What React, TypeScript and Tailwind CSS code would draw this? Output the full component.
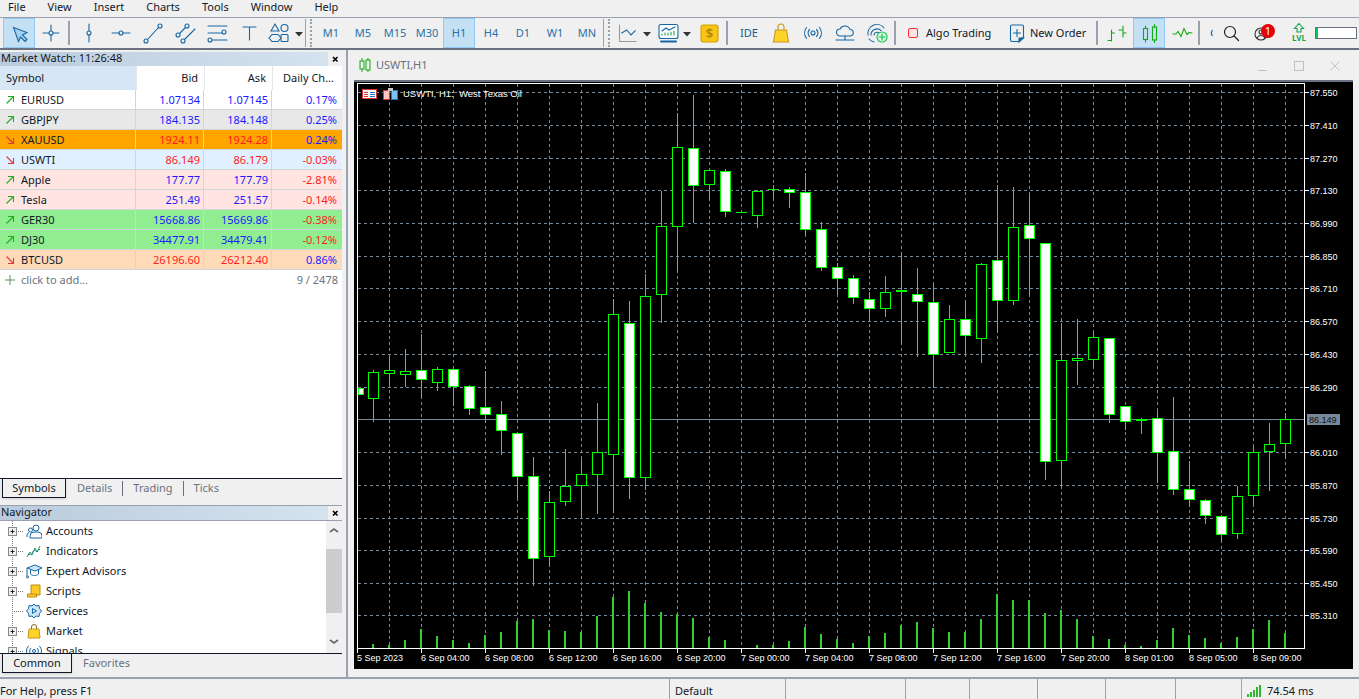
import type { ReactNode } from "react";

const blue = "#1667a5";

const menus = ["File", "View", "Insert", "Charts", "Tools", "Window", "Help"];
const periods = ["M1", "M5", "M15", "M30", "H1", "H4", "D1", "W1", "MN"];

const symbols = [
  { name: "EURUSD", bid: "1.07134", ask: "1.07145", change: "0.17%", up: true, neg: false, row: "bg-white" },
  { name: "GBPJPY", bid: "184.135", ask: "184.148", change: "0.25%", up: true, neg: false, row: "bg-[#e8e8e8]" },
  { name: "XAUUSD", bid: "1924.11", ask: "1924.28", change: "0.24%", up: false, neg: false, row: "bg-[#ffa500]" },
  { name: "USWTI", bid: "86.149", ask: "86.179", change: "-0.03%", up: false, neg: true, row: "bg-[#e0f0ff]" },
  { name: "Apple", bid: "177.77", ask: "177.79", change: "-2.81%", up: true, neg: true, row: "bg-[#ffe4e1]" },
  { name: "Tesla", bid: "251.49", ask: "251.57", change: "-0.14%", up: true, neg: true, row: "bg-[#ffe4e1]" },
  { name: "GER30", bid: "15668.86", ask: "15669.86", change: "-0.38%", up: true, neg: true, row: "bg-[#90ee90]" },
  { name: "DJ30", bid: "34477.91", ask: "34479.41", change: "-0.12%", up: true, neg: true, row: "bg-[#90ee90]" },
  { name: "BTCUSD", bid: "26196.60", ask: "26212.40", change: "0.86%", up: false, neg: false, row: "bg-[#ffdab9]" },
];

// top, bottom, wick top, wick bottom, white body, volume top
const candles: [number, number, number, number, boolean, number][] = [
  [388, 394, 388, 394, true, 648],
  [372, 398, 370, 422, false, 644],
  [370, 373, 357, 385, false, 645],
  [371, 374, 349, 387, false, 640],
  [370, 379, 334, 397, true, 629],
  [369, 382, 367, 391, false, 636],
  [369, 386, 369, 406, true, 640],
  [386, 408, 385, 415, true, 643],
  [407, 414, 371, 422, true, 635],
  [414, 430, 401, 455, true, 632],
  [433, 476, 432, 498, true, 621],
  [476, 558, 457, 586, true, 619],
  [502, 556, 491, 565, false, 630],
  [486, 501, 449, 506, false, 631],
  [474, 485, 459, 517, false, 632],
  [452, 474, 403, 514, false, 616],
  [314, 454, 299, 513, false, 597],
  [323, 477, 301, 499, true, 591],
  [296, 477, 274, 490, false, 603],
  [226, 294, 191, 323, false, 612],
  [147, 226, 113, 272, false, 614],
  [148, 185, 95, 223, true, 618],
  [170, 184, 170, 199, false, 637],
  [171, 211, 169, 217, true, 640],
  [212, 212, 212, 212, false, 648],
  [191, 215, 190, 228, false, 645],
  [189, 189, 185, 198, false, 645],
  [189, 192, 187, 208, true, 641],
  [192, 229, 173, 235, true, 627],
  [229, 267, 222, 271, true, 634],
  [267, 278, 263, 294, true, 639],
  [278, 297, 275, 304, true, 643],
  [299, 308, 292, 321, true, 636],
  [292, 308, 276, 317, false, 633],
  [290, 291, 252, 343, false, 625],
  [294, 301, 268, 357, true, 622],
  [302, 354, 285, 388, true, 628],
  [319, 352, 305, 352, false, 632],
  [319, 335, 300, 355, true, 632],
  [264, 338, 263, 363, false, 619],
  [260, 300, 185, 332, true, 594],
  [227, 300, 187, 305, false, 600],
  [225, 238, 195, 296, true, 600],
  [243, 461, 243, 480, true, 613],
  [360, 460, 323, 487, false, 610],
  [358, 360, 319, 385, false, 619],
  [337, 359, 333, 367, false, 636],
  [338, 414, 338, 423, true, 639],
  [406, 421, 406, 430, true, 645],
  [419, 420, 418, 434, false, 646],
  [418, 452, 411, 482, true, 640],
  [451, 489, 397, 495, true, 628],
  [489, 499, 461, 506, true, 635],
  [500, 515, 499, 524, true, 638],
  [516, 534, 515, 541, true, 643],
  [496, 533, 486, 539, false, 637],
  [452, 495, 447, 505, false, 629],
  [444, 451, 423, 491, false, 620],
  [419, 443, 413, 459, false, 633],
];

const prices = [
  ["87.550", 92], ["87.410", 125], ["87.270", 158], ["87.130", 190], ["86.990", 223],
  ["86.850", 256], ["86.710", 288], ["86.570", 321], ["86.430", 354], ["86.290", 387],
  ["86.010", 452], ["85.870", 485], ["85.730", 518], ["85.590", 550], ["85.450", 583], ["85.310", 615],
] as const;

const dates = [
  ["5 Sep 2023", 357], ["6 Sep 04:00", 421], ["6 Sep 08:00", 485], ["6 Sep 12:00", 549], ["6 Sep 16:00", 613],
  ["6 Sep 20:00", 677], ["7 Sep 00:00", 741], ["7 Sep 04:00", 805], ["7 Sep 08:00", 869], ["7 Sep 12:00", 933],
  ["7 Sep 16:00", 997], ["7 Sep 20:00", 1061], ["8 Sep 01:00", 1125], ["8 Sep 05:00", 1189], ["8 Sep 09:00", 1253],
] as const;

function Ico({ children, w = 24, color = blue }: { children: ReactNode; w?: number; color?: string }) {
  return (
    <svg width={w} height="24" viewBox={`0 0 ${w} 24`} fill="none" stroke={color} strokeWidth="1.1" strokeLinecap="round">
      {children}
    </svg>
  );
}

function Btn({ children, active, wide }: { children: ReactNode; active?: boolean; wide?: boolean }) {
  return (
    <div
      className={`flex h-7.5 shrink-0 items-center justify-center ${wide ? "w-10" : "w-8"} ${
        active ? "border border-[#90c8f6] bg-[#c4e0f5]" : ""
      }`}
    >
      {children}
    </div>
  );
}

function Sep() {
  return (
    <div className="flex h-7.5 w-1 shrink-0 items-center justify-center">
      <div className="h-6 w-0.5 bg-gray-400" />
    </div>
  );
}

function Grip() {
  return (
    <div className="flex h-7.5 w-2.5 shrink-0 items-center justify-start gap-0.5">
      <div className="h-7 w-px bg-gray-400" />
      <div className="ml-0.5 h-7 w-0.5 border-l-2 border-dotted border-gray-400" />
    </div>
  );
}

function Arrow({ x }: { x: number }) {
  return <path d={`M${x} 11h8l-4 4.5z`} fill="#333" stroke="none" />;
}

function Toolbar() {
  return (
    <div className="flex h-8 shrink-0 items-center border-b-2 border-gray-500 pl-0.75">
      <Btn active>
        <Ico>
          <path d="M6.5 6.5 20 11.5 15.5 14 20 18.5 18 20.500 13.5 16 11.5 20.5Z" fill="#a8d0ee" />
        </Ico>
      </Btn>
      <Btn>
        <Ico>
          <path d="M12 4v16M4 12h16" />
          <circle cx="12" cy="12" r="2" fill="#f0f0f0" />
        </Ico>
      </Btn>
      <div className="mr-0.5">
        <Sep />
      </div>
      <Btn>
        <Ico>
          <path d="M12 3v7M12 14v7" />
          <circle cx="12" cy="12" r="2" />
        </Ico>
      </Btn>
      <Btn>
        <Ico>
          <path d="M3 12h7M14 12h7" />
          <circle cx="12" cy="12" r="2" />
        </Ico>
      </Btn>
      <Btn>
        <Ico>
          <path d="M6.5 18.5 17.5 6.5" />
          <circle cx="5" cy="20" r="2" />
          <circle cx="19" cy="5" r="2" />
        </Ico>
      </Btn>
      <Btn>
        <Ico>
          <path d="M6.5 12.5 12.5 6.5M11.5 18.5 22 8" />
          <circle cx="5" cy="14" r="2" />
          <circle cx="14" cy="5" r="2" />
          <circle cx="10" cy="20" r="2" />
        </Ico>
      </Btn>
      <Btn>
        <Ico>
          <path d="M3 5h19M3 12h14M7 19h15" />
          <circle cx="19" cy="11" r="2" />
          <circle cx="5" cy="19" r="2" />
        </Ico>
      </Btn>
      <Btn>
        <Ico>
          <path d="M6 6h13M12.5 6v13" />
        </Ico>
      </Btn>
      <Btn wide>
        <Ico w={40}>
          <path d="M10 3 14 10H6Z" />
          <circle cx="19.5" cy="7" r="3.5" />
          <path d="M7 13.5h6l3 3.5-3 3.5H7L4 17z" />
          <rect x="16" y="13.5" width="7" height="7" rx="1" />
          <Arrow x={30} />
        </Ico>
      </Btn>
      <Grip />
      {periods.map((p) => (
        <Btn key={p} active={p === "H1"}>
          <span className="text-[#2b70a8]">{p}</span>
        </Btn>
      ))}
      <Grip />
      <Btn wide>
        <Ico w={40}>
          <path d="M6.5 4v16.5H23" stroke="#999" />
          <path d="M8.7 12l5-3 4.3 5 4.3-4.3" />
          <Arrow x={30} />
        </Ico>
      </Btn>
      <Btn wide>
        <Ico w={40}>
          <rect x="6" y="3.5" width="19" height="14" rx="2" fill="#fff" />
          <path d="M9 14v-1M12 14v-2M15 14v-2M18 14v-3M21 14v-4" stroke="#1aa34a" />
          <path d="M9 10l4-3 3 2 6-3" />
          <path d="M8 20.5h15" strokeWidth="2" />
          <Arrow x={30} />
        </Ico>
      </Btn>
      <Btn>
        <Ico color="#d49f00">
          <rect x="4" y="4" width="17" height="17" rx="2.5" fill="#f9c515" />
          <text x="12.5" y="17" textAnchor="middle" fontSize="13" fontWeight="700" fill="#b5860b" stroke="none">
            $
          </text>
        </Ico>
      </Btn>
      <Sep />
      <div className="w-1" />
      <Btn>
        <span className="text-[#0f5c99]">IDE</span>
      </Btn>
      <Btn>
        <Ico color="#c9971c">
          <path d="M6.5 9h11l2 12h-15z" fill="#ffd42a" />
          <path d="M9 9V6a3 3 0 0 1 6 0v3" />
        </Ico>
      </Btn>
      <Btn>
        <Ico>
          <circle cx="12" cy="12" r="2" />
          <path d="M8.5 8.5a5 5 0 0 0 0 7M15.5 8.5a5 5 0 0 1 0 7M5.5 6.5a9 9 0 0 0 0 11M18.5 6.5a9 9 0 0 1 0 11" />
        </Ico>
      </Btn>
      <Btn>
        <Ico>
          <path d="M7 15a3.5 3.5 0 0 1 0-7 5.5 5.5 0 0 1 10 .5 3.2 3.2 0 0 1 0 6.5z" />
          <path d="M12 15v4M3 19h18" />
        </Ico>
      </Btn>
      <Btn>
        <Ico>
          <path d="M3 14a9 9 0 0 1 16-7M6 14a6 6 0 0 1 10-4.5M9 14a3 3 0 0 1 5-2M4 18a9 9 0 0 0 5 3" />
          <circle cx="17" cy="16" r="5" stroke="#12c24a" fill="#d9ffe0" />
          <path d="M17 13v6M14 16h6" stroke="#12c24a" />
        </Ico>
      </Btn>
      <Sep />
      <div className="flex w-27 shrink-0 items-center gap-2 pl-2.75">
        <span className="h-2.5 w-2.5 rounded-xs border border-red-500 bg-red-100" />
        <span>Algo Trading</span>
      </div>
      <div className="flex w-22.5 shrink-0 items-center">
        <Ico>
          <path d="M7 4h10a1.5 1.5 0 0 1 1.5 1.5V16L14 20.5H7A1.5 1.5 0 0 1 5.5 19V5.5A1.5 1.5 0 0 1 7 4z" />
          <path d="M12 8.5v7M8.5 12h7" />
          <path d="M14 21v-4h4.5z" fill={blue} />
        </Ico>
        <span className="ml-px">New Order</span>
      </div>
      <Sep />
      <div className="w-0.5" />
      <Btn>
        <Ico color="#12a812">
          <path d="M6.5 9v11M3 19.5h3.5M6.5 12h3M18 5v11M14 9h4M18 12h3" />
        </Ico>
      </Btn>
      <Btn active>
        <Ico color="#12a812">
          <rect x="6.5" y="7.5" width="4" height="11" />
          <rect x="15.5" y="6" width="4" height="13" />
          <path d="M8.5 5v2.5M8.5 18.5V21M17.5 3.5V6M17.5 19v2.500" />
        </Ico>
      </Btn>
      <Btn>
        <Ico color="#12a812">
          <path d="M4 13h3l2-2.500 3 5 3-8 3 6 2-2 3 .5" />
        </Ico>
      </Btn>
      <Sep />
      <div className="w-3.5 shrink-0">
        <svg width="14" height="24" viewBox="0 0 14 24" fill="none" stroke={blue} strokeWidth="1.2">
          <path d="M11.5 9a5 5 0 0 0 0 6" />
        </svg>
      </div>
      <Btn>
        <Ico color="#222">
          <circle cx="11" cy="11" r="5.5" strokeWidth="1.2" />
          <path d="M15 15l4.5 4.5" strokeWidth="1.3" />
        </Ico>
      </Btn>
      <div className="relative flex h-7.5 w-8 shrink-0 items-center justify-center">
        <Ico color="#333">
          <circle cx="10" cy="13" r="6" />
          <circle cx="10" cy="11" r="2" />
          <path d="M6 17a4.5 4.5 0 0 1 8 0" />
        </Ico>
        <span className="absolute right-1 top-1.5 flex h-3.5 w-3.5 items-center justify-center rounded-full bg-red-600 text-white">
          1
        </span>
      </div>
      <div className="w-1" />
      <Btn>
        <Ico color="#19a34a">
          <path d="M12 2.5 16.5 7.5H14V11H10V7.5H7.5z" />
          <text x="12" y="20" textAnchor="middle" fontSize="8" fontWeight="700" fill="#19a34a" stroke="none">
            LVL
          </text>
        </Ico>
      </Btn>
      <div className="flex h-3 w-10.5 shrink-0 border border-gray-500 bg-white">
        <div className="w-0.5 bg-green-500" />
      </div>
    </div>
  );
}

function PanelHeader({ title }: { title: string }) {
  return (
    <div className="flex h-3.5 shrink-0 items-center">
      <div className="flex h-full w-82 items-center bg-linear-to-r from-[#b9cbdc] to-[#d5e3ef] pb-0.5 pl-px">{title}</div>
      <svg width="14" height="14" viewBox="0 0 14 14" stroke="#000" strokeWidth="1.6">
        <path d="M5 5l4.5 4.5M9.5 5 5 9.5" />
      </svg>
    </div>
  );
}

function Tabs({ active, others, width }: { active: string; others: string[]; width: string }) {
  return (
    <div className="mr-0.5 flex h-5 shrink-0 items-stretch border-t border-gray-900">
      <div className={`ml-0.5 flex items-center justify-center border-x border-b border-gray-900 bg-[#f0f0f0] shadow-sm ${width}`}>
        {active}
      </div>
      {others.map((t, i) => (
        <div key={t} className={`flex items-center px-2.5 text-gray-500 ${i > 0 ? "my-0.5 border-l border-gray-500" : "my-0.5 pl-2.75"}`}>
          {t}
        </div>
      ))}
    </div>
  );
}

function MarketWatch() {
  return (
    <div className="flex min-h-0 flex-1 flex-col pt-0.5">
      <PanelHeader title="Market Watch:  11:26:48" />
      <div className="mr-0.5 flex min-h-0 flex-1 flex-col bg-white">
        <div className="flex h-6 shrink-0 items-center">
          <div className="flex h-full w-34 items-center bg-[#d6e6f5] pl-1.5">Symbol</div>
          <div className="w-17 border-l border-gray-200 pr-1.5 text-right leading-6">Bid</div>
          <div className="w-17 border-l border-gray-200 pr-1.5 text-right leading-6">Ask</div>
          <div className="w-17 border-l border-gray-200 pr-1.5 text-right leading-6">Daily Ch...</div>
        </div>
        {symbols.map((s) => (
          <div key={s.name} className={`flex h-5 shrink-0 items-center border-b border-gray-300 ${s.row}`}>
            <div className="flex h-full w-34 items-center gap-px border-r border-gray-300 pl-1">
              <svg
                width="16"
                height="16"
                viewBox="0 0 16 16"
                fill="none"
                stroke={s.up ? "#1fae1f" : "#e0393e"}
                strokeWidth="1.1"
              >
                {s.up ? <path d="M2.5 11.5 9 5M4 4.5h5.5V10" /> : <path d="M2.5 4.5 9 11M9.5 6v5.5H4" />}
              </svg>
              <span className="pt-0.5">{s.name}</span>
            </div>
            <div className={`flex h-full w-17 items-center justify-end border-r border-gray-300 pr-0.75 pt-0.5 ${s.up ? "text-[#1a1aff]" : "text-[#ff1a1a]"}`}>
              {s.bid}
            </div>
            <div className={`flex h-full w-17 items-center justify-end border-r border-gray-300 pr-0.75 pt-0.5 ${s.up ? "text-[#1a1aff]" : "text-[#ff1a1a]"}`}>
              {s.ask}
            </div>
            <div className={`flex h-full w-17 items-center justify-end pr-0.75 pt-0.5 ${s.neg ? "text-[#ff1a1a]" : "text-[#1a1aff]"}`}>
              {s.change}
            </div>
          </div>
        ))}
        <div className="flex h-5 shrink-0 items-center px-1 text-gray-500">
          <svg width="16" height="16" viewBox="0 0 16 16" stroke="#5f8f5f" strokeWidth="1">
            <path d="M1 8h10M6 3v10" />
          </svg>
          <span className="ml-px">click to add...</span>
          <span className="ml-auto">9 / 2478</span>
        </div>
      </div>
      <Tabs active="Symbols" others={["Details", "Trading", "Ticks"]} width="w-16" />
    </div>
  );
}

const navItems: { name: string; plus: boolean; icon: ReactNode }[] = [
  {
    name: "Accounts",
    plus: true,
    icon: (
      <>
        <circle cx="10" cy="5" r="3" />
        <circle cx="4.5" cy="7" r="2" />
        <path d="M4 15v-2a4 4 0 0 1 4-4h4a4 4 0 0 1 4 4v2zM1 14v-2a3 3 0 0 1 2-2.5" />
      </>
    ),
  },
  {
    name: "Indicators",
    plus: true,
    icon: (
      <>
        <path d="M1 14l3-5 2 3 3-7 2 4 3-6" stroke="#1aa34a" />
        <path d="M2 11l3 1 3-5 3 2 3-3" strokeDasharray="2 1" />
      </>
    ),
  },
  {
    name: "Expert Advisors",
    plus: true,
    icon: (
      <>
        <path d="M1 5l8-3 7 3-7 3z" fill="#cfe6f7" />
        <path d="M4.5 7v4c2 2 6 2 8 0V7M1 5v8" />
        <circle cx="1.5" cy="14" r="1" />
      </>
    ),
  },
  {
    name: "Scripts",
    plus: true,
    icon: (
      <>
        <path d="M5 2h9v10H5z" fill="#ffc928" stroke="#b98a10" />
        <path d="M1.5 11h9v3h-9z" fill="#ffc928" stroke="#b98a10" />
      </>
    ),
  },
  {
    name: "Services",
    plus: false,
    icon: (
      <>
        <path d="M8 1l2 2 3-.5.5 3 2 2.5-2 2.5-.5 3-3-.5-2 2-2-2-3 .5-.5-3L.5 8l2-2.5.5-3 3 .5z" fill="#cfe6f7" />
        <path d="M6.5 5.5v5l4-2.5z" />
      </>
    ),
  },
  {
    name: "Market",
    plus: true,
    icon: (
      <>
        <path d="M3 6h10l1 9H2z" fill="#ffd42a" stroke="#c9971c" />
        <path d="M5.5 6V4a2.5 2.5 0 0 1 5 0v2" stroke="#8a6a10" />
      </>
    ),
  },
  {
    name: "Signals",
    plus: true,
    icon: (
      <>
        <circle cx="8" cy="8" r="1.5" />
        <path d="M5 5a4 4 0 0 0 0 6M11 5a4 4 0 0 1 0 6M2.5 3a8 8 0 0 0 0 10M13.5 3a8 8 0 0 1 0 10" />
      </>
    ),
  },
];

function Navigator() {
  return (
    <div className="flex shrink-0 flex-col pb-1">
      <div className="mr-0.5 h-2 border-b border-gray-400" />
      <PanelHeader title="Navigator" />
      <div className="mr-0.5 flex h-33.25 overflow-hidden border-t border-gray-400 bg-white">
        <div className="flex-1">
          {navItems.map((n) => (
            <div key={n.name} className="flex h-5 items-center">
              <svg width="24" height="20" viewBox="0 0 24 20" className="shrink-0">
                <path d="M12.5 0v20M12 10.5h12" stroke="#777" strokeDasharray="1 1" />
                {n.plus && (
                  <>
                    <rect x="8.5" y="6.5" width="8" height="8" fill="#f0f0f0" stroke="#888" />
                    <path d="M10.5 10.5h4M12.5 8.5v4" stroke="#223" />
                  </>
                )}
              </svg>
              <svg width="16" height="16" viewBox="0 0 16 16" fill="none" stroke={blue} className="ml-0.5 shrink-0">
                {n.icon}
              </svg>
              <span className="ml-1 text-gray-900">{n.name}</span>
            </div>
          ))}
        </div>
        <div className="flex w-4 shrink-0 flex-col items-center bg-[#f0f0f0]">
          <svg width="16" height="28" viewBox="0 0 16 28" fill="none" stroke="#666" strokeWidth="1.6">
            <path d="M4 11l4-3 4 3" />
          </svg>
          <div className="h-16 w-4 bg-[#cdcdcd]" />
          <svg width="16" height="38" viewBox="0 0 16 38" fill="none" stroke="#666" strokeWidth="1.6">
            <path d="M4 27l4 3 4-3" />
          </svg>
        </div>
      </div>
      <Tabs active="Common" others={["Favorites"]} width="w-17.5" />
    </div>
  );
}

function Chart() {
  const vertical: number[] = [];
  for (let x = 389; x <= 1285; x += 32) vertical.push(x);

  return (
    <svg viewBox="354 82 999 587" className="block h-full w-full bg-black font-['Liberation_Sans',sans-serif]" shapeRendering="crispEdges">
      <g stroke="#778899" strokeDasharray="3 3">
        {vertical.map((x) => (
          <path key={x} d={`M${x + 0.5} 84V648`} />
        ))}
        {prices.map(([p, y]) => (
          <path key={p} d={`M358 ${y + 0.5}H1304`} />
        ))}
      </g>
      <path d="M358 419.5H1304" stroke="#778899" />

      {candles.map(([top, bottom, wickTop, wickBottom, white, vol], i) => {
        const x = 357 + i * 16;
        const doji = top === bottom;
        return (
          <g key={i} stroke="#00ff00" fill="none">
            {wickBottom > wickTop && <path d={`M${x + 0.5} ${wickTop}V${wickBottom}`} />}
            {doji ? (
              <path d={`M${x - 5} ${top + 0.5}H${x + 6}`} />
            ) : (
              <rect
                x={Math.max(x - 4.5, 358.5)}
                y={top + 0.5}
                width={i === 0 ? 5 : 10}
                height={bottom - top}
                fill={white ? "#fff" : "#000"}
              />
            )}
            <rect x={x - 1} y={vol} width="2" height={648 - vol} fill="#32cd32" stroke="none" />
          </g>
        );
      })}

      <path d="M357.5 83.5H1304.5V648.5H357.5Z" stroke="#fff" fill="none" />
      {prices.map(([p, y]) => (
        <g key={p}>
          <path d={`M1305 ${y + 0.5}H1309`} stroke="#fff" />
          <text x="1310" y={y + 3.5} fill="#fff" fontSize="9">
            {p}
          </text>
        </g>
      ))}
      <rect x="1307" y="414" width="33" height="11" fill="#778899" />
      <text x="1309" y="423" fill="#111" fontSize="9">
        86.149
      </text>
      {dates.map(([d, x]) => (
        <g key={d}>
          <path d={`M${x + 0.5} 649V653`} stroke="#fff" />
          <text x={x} y="661" fill="#fff" fontSize="9">
            {d}
          </text>
        </g>
      ))}

      <g>
        <rect x="362.5" y="89.5" width="14" height="9" fill="#fff" stroke="#d33" />
        <path d="M364 92h4M364 94h4M364 96h4" stroke="#d33" />
        <path d="M370 92h5M370 94h5M370 96h5" stroke="#27c" />
        <rect x="383.5" y="90.5" width="6" height="9" fill="#ffc4c4" stroke="#d33" />
        <rect x="391.5" y="90.5" width="6" height="9" fill="#7ec0ee" stroke="#27c" />
        <rect x="388" y="88" width="5" height="3" fill="#ccc" />
      </g>
      <text x="403" y="97" fill="#fff" fontSize="9.5">
        USWTI, H1:{"\u00a0\u00a0"}West Texas Oil
      </text>
    </svg>
  );
}

function ChartWindow() {
  return (
    <div className="ml-0.5 flex min-w-0 flex-1 flex-col border-l-2 border-gray-400 pb-2 pl-1.5 pr-1.5">
      <div className="flex h-7.5 shrink-0 items-center pl-1.25">
        <svg width="12" height="16" viewBox="0 0 12 16" fill="none" stroke="#12a812">
          <path d="M3 1v3M3 12v3M9 1v2M9 13v2" />
          <rect x="1" y="4" width="4" height="8" />
          <rect x="7" y="3" width="4" height="10" />
        </svg>
        <span className="ml-1.25 text-gray-500">USWTI,H1</span>
        <div className="ml-auto flex">
          <svg width="36" height="16" viewBox="0 0 36 16" fill="none" stroke="#c0c0c0">
            <path d="M13 13.5h9" />
          </svg>
          <svg width="36" height="16" viewBox="0 0 36 16" fill="none" stroke="#c0c0c0">
            <rect x="13.5" y="4.5" width="9" height="9" />
          </svg>
          <svg width="36" height="16" viewBox="0 0 36 16" fill="none" stroke="#c0c0c0">
            <path d="M13.5 4.5l9 9M22.5 4.5l-9 9" />
          </svg>
        </div>
      </div>
      <div className="min-h-0 flex-1 border-t-2 border-gray-500">
        <Chart />
      </div>
    </div>
  );
}

function StatusBar() {
  return (
    <div className="flex h-5.5 shrink-0 items-center border-t-2 border-gray-400">
      <div className="flex-1 pt-1">For Help, press F1</div>
      <div className="flex h-full w-29 items-center border-l border-gray-400 pl-1.25 pt-1">Default</div>
      <div className="h-full w-30 border-l border-gray-400" />
      <div className="h-full w-16 border-l border-gray-400" />
      <div className="h-full w-17 border-l border-gray-400" />
      <div className="h-full w-17 border-l border-gray-400" />
      <div className="h-full w-17.5 border-l border-gray-400" />
      <div className="h-full w-16.5 border-l border-gray-400" />
      <div className="flex h-full w-29.5 items-center gap-1 border-l border-gray-400 pl-1 pt-1">
        <svg width="16" height="14" viewBox="0 0 16 14" fill="#2fb52f">
          <rect x="1" y="10" width="2" height="3" />
          <rect x="4" y="8" width="2" height="5" />
          <rect x="7" y="6" width="2" height="7" />
          <rect x="10" y="3" width="2" height="10" />
          <rect x="13" y="1" width="2" height="12" />
        </svg>
        <span className="ml-px">74.54 ms</span>
      </div>
    </div>
  );
}

export default function App() {
  return (
    <div className="flex h-screen w-full flex-col overflow-hidden bg-[#f0f0f0] font-['Noto_Sans',sans-serif] text-[11px] text-gray-900">
      <div className="flex h-4.5 shrink-0 items-center gap-5.5 border-b border-gray-400 pb-0.5 pl-2">
        {menus.map((m) => (
          <span key={m}>{m}</span>
        ))}
      </div>
      <Toolbar />
      <div className="flex min-h-0 flex-1">
        <div className="flex w-86 shrink-0 flex-col">
          <MarketWatch />
          <Navigator />
        </div>
        <ChartWindow />
      </div>
      <StatusBar />
    </div>
  );
}
